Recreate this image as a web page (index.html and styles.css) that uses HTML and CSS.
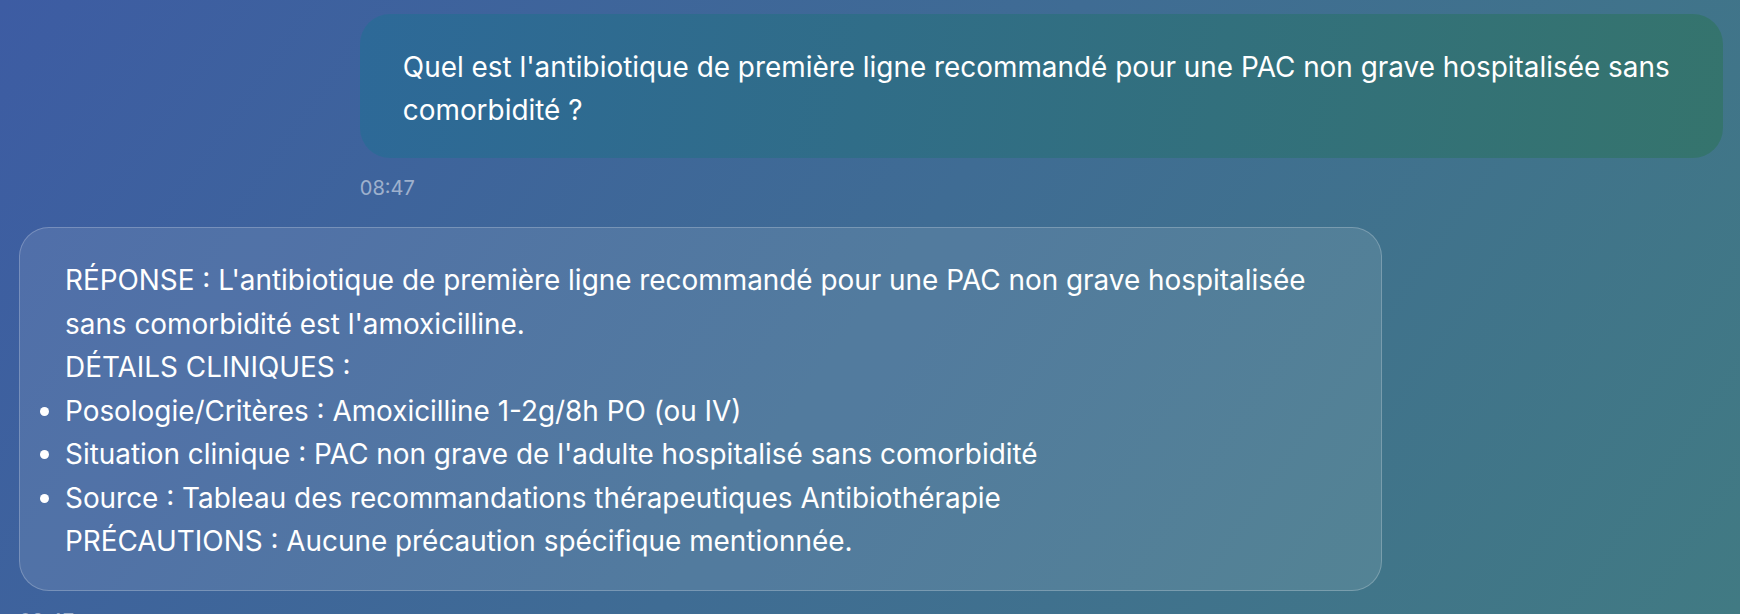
FILE: index.html
```html
<!DOCTYPE html>
<html lang="fr">
<head>
<meta charset="utf-8">
<title>Chat</title>
<link rel="stylesheet" href="styles.css">
</head>
<body>
<main class="chat">
  <section class="msg msg-user">
    <div class="bubble bubble-user">
      <p class="line">Quel est l'antibiotique de première ligne recommandé pour une PAC non grave hospitalisée sans comorbidité ?</p>
    </div>
    <div class="time">08:47</div>
  </section>
  <section class="msg msg-bot">
    <div class="bubble bubble-bot">
      <p class="line">RÉPONSE : L'antibiotique de première ligne recommandé pour une PAC non grave hospitalisée sans comorbidité est l'amoxicilline.</p>
      <p class="line">DÉTAILS CLINIQUES :</p>
      <ul class="list">
        <li>Posologie/Critères : Amoxicilline 1-2g/8h PO (ou IV)</li>
        <li>Situation clinique : PAC non grave de l'adulte hospitalisé sans comorbidité</li>
        <li>Source : Tableau des recommandations thérapeutiques Antibiothérapie</li>
      </ul>
      <p class="line">PRÉCAUTIONS : Aucune précaution spécifique mentionnée.</p>
    </div>
    <div class="time">08:47</div>
  </section>
</main>
</body>
</html>
```
FILE: styles.css
```css
html, body {
  margin: 0;
  height: 100%;
}
body {
  background: linear-gradient(125deg, #3d5ca3 0%, #3f6c94 50%, #417a83 100%);
  font-family: "Inter", "Noto Sans", sans-serif;
  color: #ffffff;
  overflow: hidden;
}
.chat {
  display: flex;
  flex-direction: column;
  padding: 14px 17px 0 19px;
}
.msg {
  display: flex;
  flex-direction: column;
  width: 80%;
  margin-bottom: 27px;
}
.msg-user {
  align-self: flex-end;
}
.msg-bot {
  align-self: flex-start;
}
.bubble {
  box-sizing: border-box;
  border-radius: 30px;
  font-size: 27.9px;
  line-height: 43.5px;
}
.bubble-user {
  background: linear-gradient(100deg, #2d6998 0%, #35746d 100%);
  padding: 32px 24px 27px 43px;
  line-height: 42.5px;
}
.bubble-bot {
  background: rgba(255, 255, 255, 0.1);
  border: 1px solid rgba(255, 255, 255, 0.22);
  padding: 31px 44px 26px 45px;
}
.line {
  margin: 0;
}
.list {
  margin: 0;
  padding: 0;
  list-style: disc outside;
}
.time {
  margin-top: 18px;
  font-size: 20px;
  line-height: 24px;
  color: rgba(255, 255, 255, 0.5);
}
```
